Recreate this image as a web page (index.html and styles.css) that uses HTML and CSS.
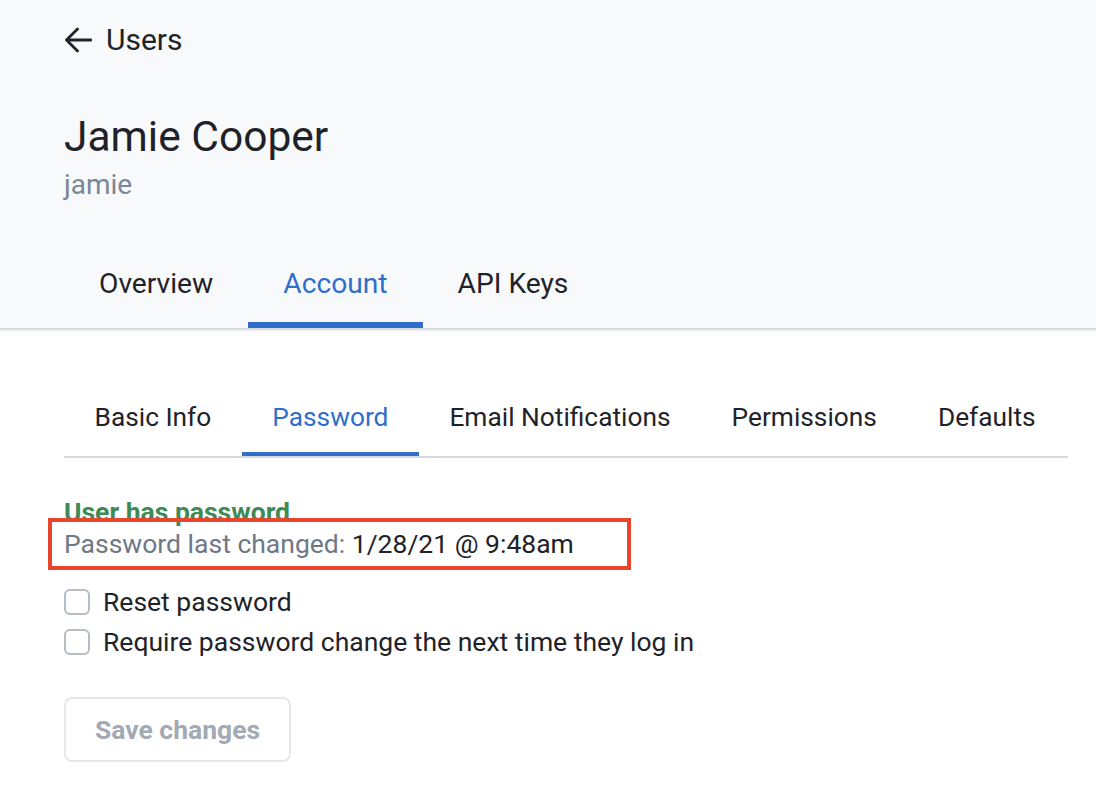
FILE: index.html
```html
<!DOCTYPE html>
<html lang="en">
<head>
<meta charset="utf-8">
<title>Jamie Cooper – Account</title>
<link rel="stylesheet" href="styles.css">
</head>
<body>
<header class="hero">
  <a class="back" href="#">
    <svg class="back-icon" viewBox="0 0 28 26" width="28" height="26" aria-hidden="true">
      <path d="M27 13 H2.5 M13.5 2 L2.5 13 L13.5 24" fill="none" stroke="#202329" stroke-width="2.8" stroke-linecap="round" stroke-linejoin="round"/>
    </svg>
    <span>Users</span>
  </a>
  <h1 class="name">Jamie Cooper</h1>
  <div class="username">jamie</div>
  <nav class="tabs">
    <a class="tab" href="#">Overview</a>
    <a class="tab active" href="#">Account</a>
    <a class="tab" href="#">API Keys</a>
  </nav>
</header>
<main class="content">
  <nav class="subtabs">
    <a class="subtab" href="#">Basic Info</a>
    <a class="subtab active" href="#">Password</a>
    <a class="subtab" href="#">Email Notifications</a>
    <a class="subtab" href="#">Permissions</a>
    <a class="subtab" href="#">Defaults</a>
  </nav>
  <section class="password">
    <div class="status">User has password</div>
    <div class="changed"><span class="label">Password last changed:</span> 1/28/21 @ 9:48am</div>
    <label class="check"><span class="box"></span>Reset password</label>
    <label class="check"><span class="box"></span>Require password change the next time they log in</label>
    <button class="save" type="button">Save changes</button>
  </section>
</main>
</body>
</html>
```
FILE: styles.css
```css
*, *::before, *::after { box-sizing: border-box; }
html, body { margin: 0; padding: 0; }
body {
  font-family: Roboto, "Liberation Sans", Arial, sans-serif;
  color: #1f2329;
  background: #ffffff;
  width: 1096px;
  height: 788px;
  overflow: hidden;
}
a { color: inherit; text-decoration: none; }

.hero {
  background: #f8f9fb;
  padding: 20px 64px 0 64px;
  border-bottom: 2px solid #d9dce0;
  box-shadow: 0 1px 2px rgba(0,0,0,0.08);
}
.back {
  display: flex;
  align-items: center;
  gap: 14px;
  height: 40px;
  font-size: 30px;
  line-height: 40px;
  color: #202329;
}
.back-icon { display: block; }
.name {
  margin: 52px 0 0 0;
  font-size: 42.5px;
  font-weight: 400;
  line-height: 50px;
  color: #1f2329;
}
.username {
  font-size: 28px;
  line-height: 36px;
  color: #7a8796;
  margin-top: 5px;
}
.tabs {
  display: flex;
  margin-top: 43px;
}
.tab {
  flex: none;
  white-space: nowrap;
  padding: 0 35px;
  font-size: 28.2px;
  line-height: 76px;
  border-bottom: 6px solid transparent;
  color: #1f2329;
}
.tab.active {
  color: #2f6fca;
  border-bottom-color: #2f6fca;
}

.content {
  padding: 52px 28px 0 64px;
}
.subtabs {
  display: flex;
  border-bottom: 2px solid #d6d9dd;
}
.subtab {
  flex: none;
  white-space: nowrap;
  padding: 0 30.5px;
  font-size: 26.3px;
  line-height: 70px;
  border-bottom: 4px solid transparent;
  color: #1f2329;
}
.subtab.active {
  color: #2f6fca;
  border-bottom-color: #2f6fca;
}

.password {
  padding-top: 38px;
  font-size: 26.5px;
}
.status {
  color: #3d8a55;
  font-weight: 700;
  line-height: 32px;
}
.changed {
  position: relative;
  line-height: 32px;
  color: #1f2329;
}
.changed .label { color: #6e7887; }
.changed::after {
  content: "";
  position: absolute;
  left: -16px;
  top: -10px;
  width: 583px;
  height: 52px;
  border: 4px solid #e7452c;
}
.check {
  display: flex;
  align-items: center;
  gap: 13px;
  line-height: 40px;
  color: #1f2329;
}
.check:first-of-type { margin-top: 22px; }
.box {
  width: 26px;
  height: 26px;
  border: 2px solid #b6bcc5;
  border-radius: 6px;
  background: #fff;
  flex: none;
}
.save {
  margin-top: 35px;
  display: block;
  width: 227px;
  height: 65px;
  border: 2px solid #e4e7eb;
  border-radius: 8px;
  background: #ffffff;
  font-family: inherit;
  font-size: 26.5px;
  font-weight: 700;
  color: #a3aab3;
  padding: 0;
}
```
